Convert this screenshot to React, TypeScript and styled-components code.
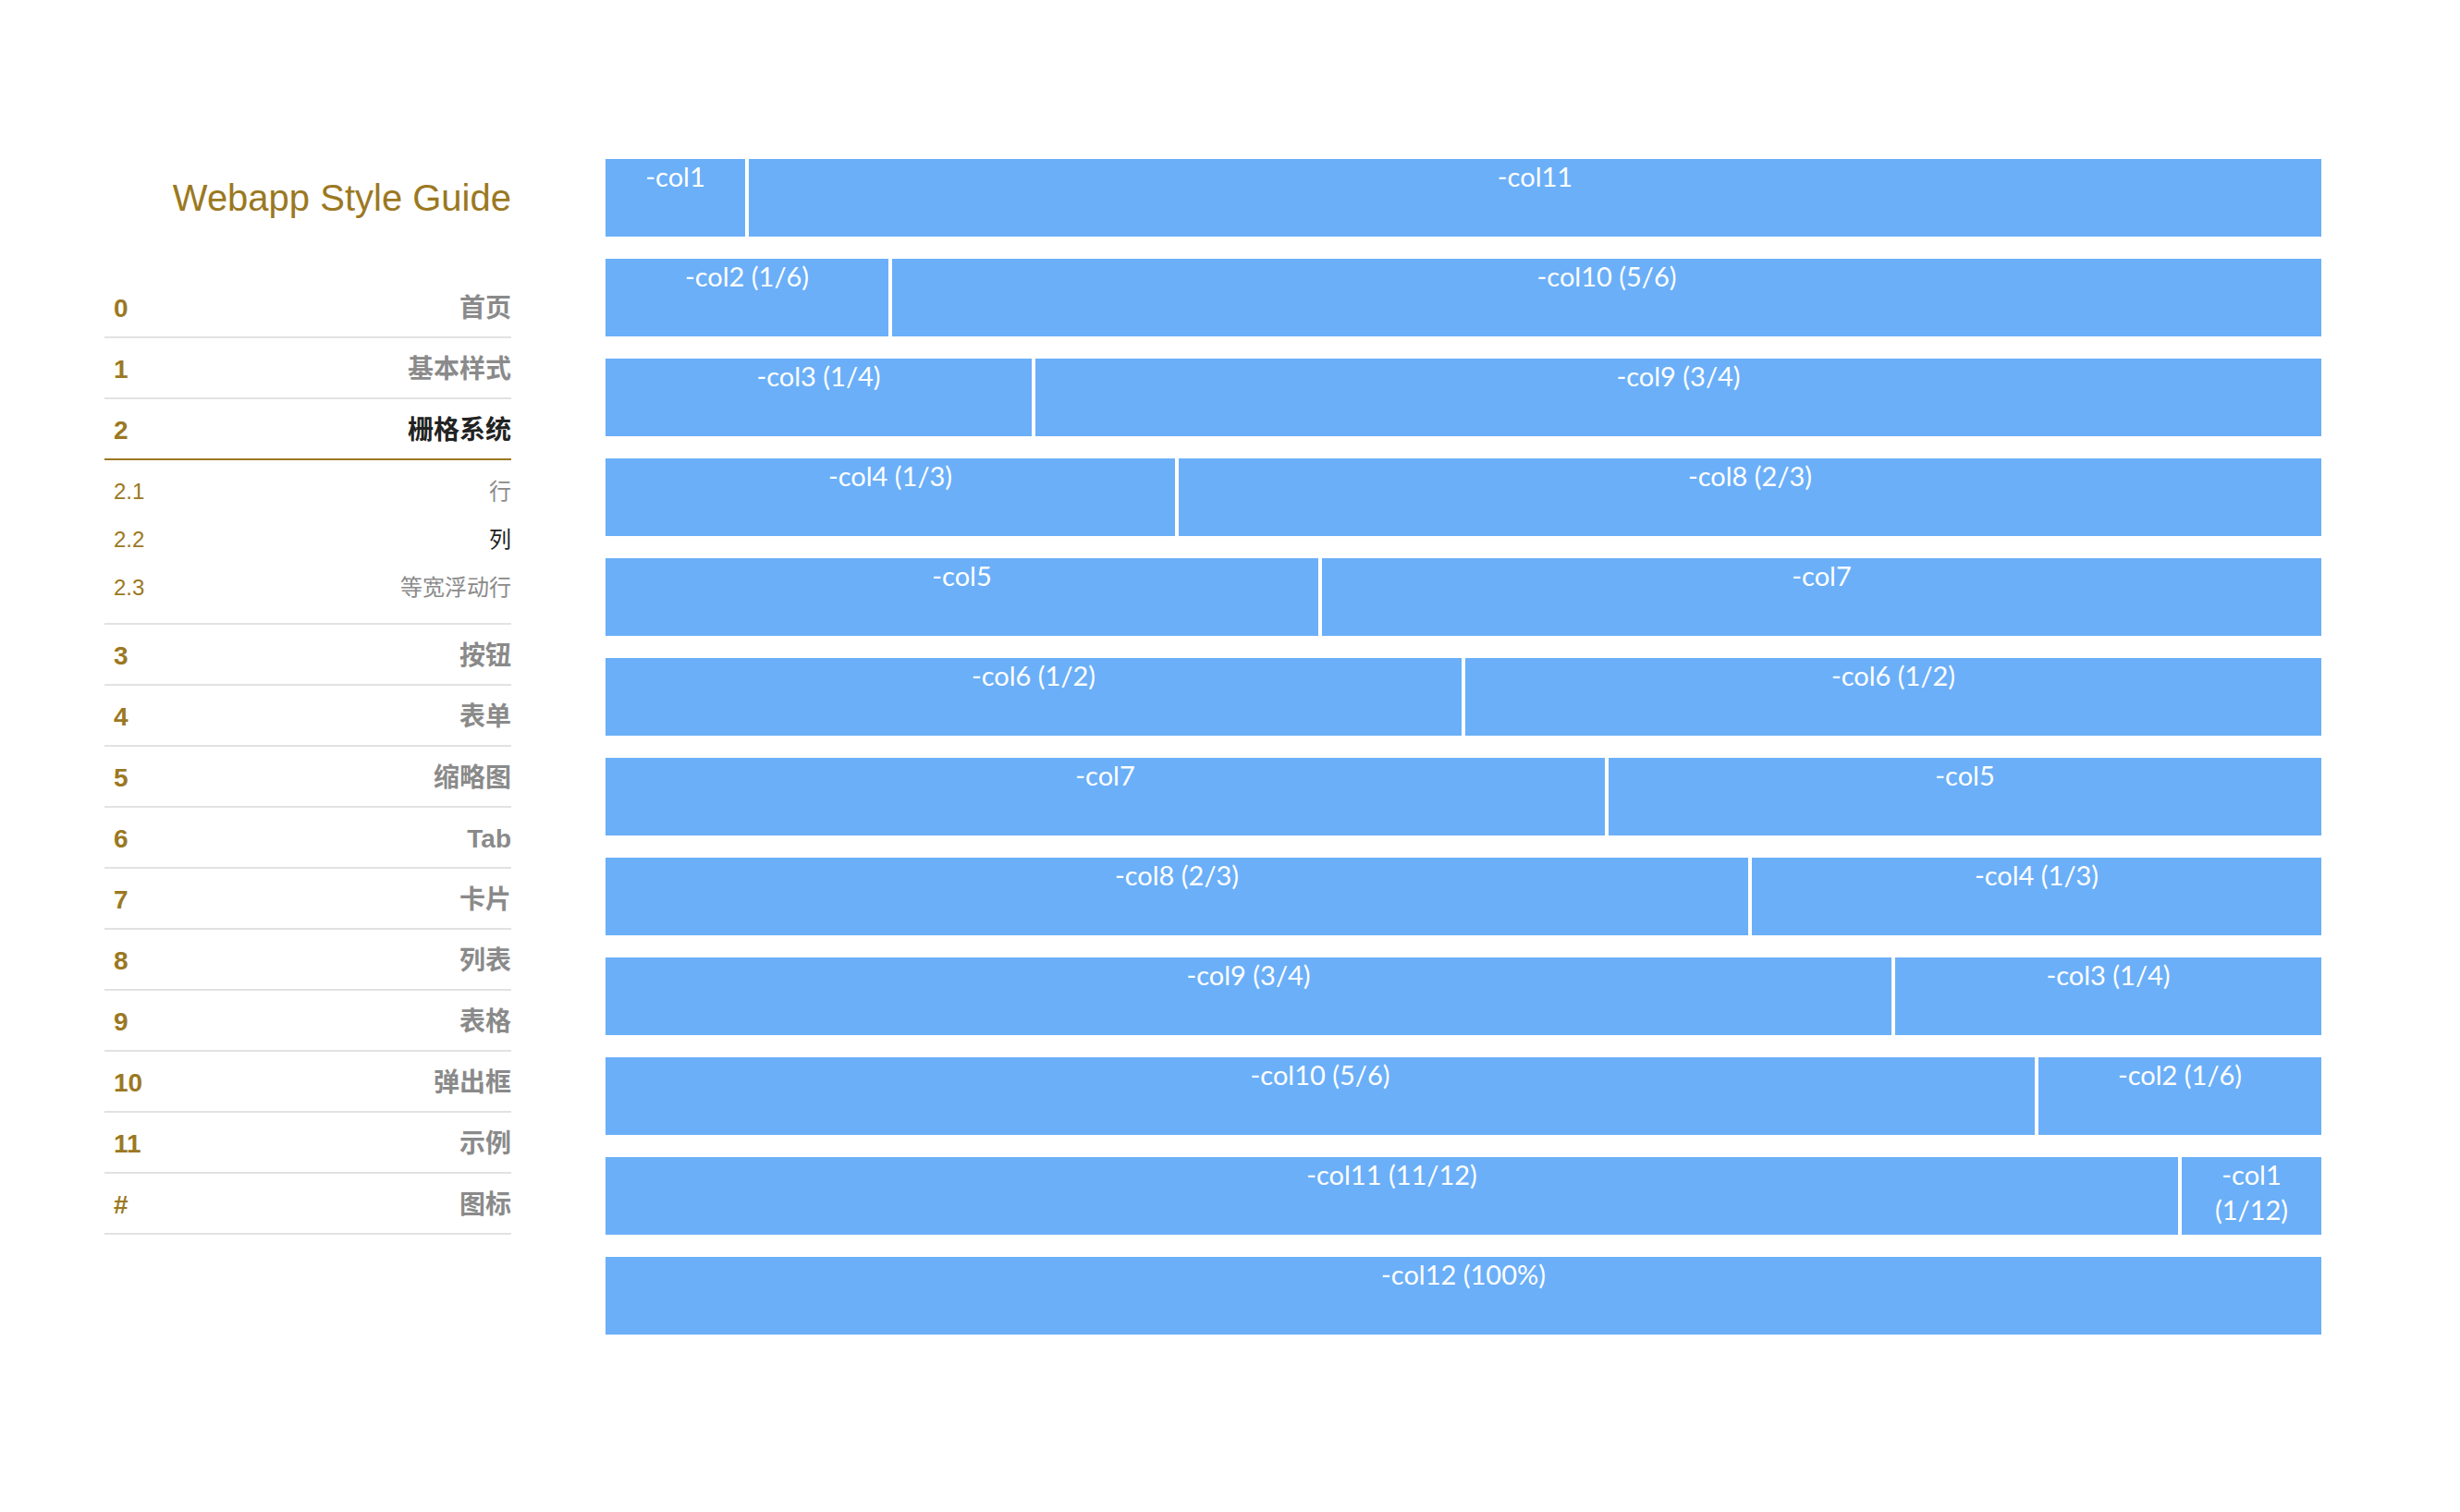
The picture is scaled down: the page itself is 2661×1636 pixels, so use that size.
import React from "react";
import styled, { createGlobalStyle } from "styled-components";

const gold = "#9b7822";
const sans = `"Liberation Sans", "Noto Sans CJK SC", sans-serif`;

const GlobalStyle = createGlobalStyle`
  *, *::before, *::after { box-sizing: border-box; }
  body { margin: 0; background: #fff; font-family: ${sans}; }
`;

const Page = styled.div`
  display: flex;
  align-items: flex-start;
  gap: 102px;
  padding: 172px 150px 120px 113px;
`;

const Sidebar = styled.aside`
  flex: 0 0 440px;
  padding-top: 12px;
`;

const Title = styled.h1`
  margin: 0 0 56px;
  font-size: 40px;
  line-height: 60px;
  font-weight: 400;
  text-align: right;
  white-space: nowrap;
  color: ${gold};
`;

const List = styled.ul`
  list-style: none;
  margin: 0;
  padding: 0;
`;

const SubList = styled(List)`
  padding: 8px 0 12px;
  border-bottom: 2px solid #e2e2e2;
`;

const NavLink = styled.a<{ $active?: boolean }>`
  display: flex;
  justify-content: space-between;
  padding: 4px 0 0 10px;
  border-bottom: 2px solid ${(p) => (p.$active ? gold : "#e2e2e2")};
  font-size: 28px;
  line-height: 60px;
  font-weight: 700;
  text-decoration: none;
  color: ${(p) => (p.$active ? "#222" : "#8a8a8a")};
`;

const SubLink = styled(NavLink)`
  padding-top: 0;
  border-bottom: 0;
  font-size: 24px;
  line-height: 52px;
  font-weight: 400;
`;

const Index = styled.span`
  color: ${gold};
`;

const Grid = styled.main`
  flex: 1;
  min-width: 0;
  display: flex;
  flex-direction: column;
  gap: 24px;
`;

const Row = styled.div`
  display: grid;
  grid-template-columns: repeat(12, minmax(0, 1fr));
  column-gap: 4px;
`;

const Col = styled.div<{ $span: number }>`
  grid-column: span ${(p) => p.$span};
  min-height: 84px;
  padding: 0 4px;
  background: #6baff8;
  color: #fff;
  font-family: Lato, "Liberation Sans", sans-serif;
  font-size: 29px;
  line-height: 38px;
  text-align: center;
`;

type Item = { index: string; label: string; active?: boolean; children?: Item[] };

const items: Item[] = [
  { index: "0", label: "首页" },
  { index: "1", label: "基本样式" },
  {
    index: "2",
    label: "栅格系统",
    active: true,
    children: [
      { index: "2.1", label: "行" },
      { index: "2.2", label: "列", active: true },
      { index: "2.3", label: "等宽浮动行" },
    ],
  },
  { index: "3", label: "按钮" },
  { index: "4", label: "表单" },
  { index: "5", label: "缩略图" },
  { index: "6", label: "Tab" },
  { index: "7", label: "卡片" },
  { index: "8", label: "列表" },
  { index: "9", label: "表格" },
  { index: "10", label: "弹出框" },
  { index: "11", label: "示例" },
  { index: "#", label: "图标" },
];

const rows: [number, string][][] = [
  [[1, "-col1"], [11, "-col11"]],
  [[2, "-col2 (1/6)"], [10, "-col10 (5/6)"]],
  [[3, "-col3 (1/4)"], [9, "-col9 (3/4)"]],
  [[4, "-col4 (1/3)"], [8, "-col8 (2/3)"]],
  [[5, "-col5"], [7, "-col7"]],
  [[6, "-col6 (1/2)"], [6, "-col6 (1/2)"]],
  [[7, "-col7"], [5, "-col5"]],
  [[8, "-col8 (2/3)"], [4, "-col4 (1/3)"]],
  [[9, "-col9 (3/4)"], [3, "-col3 (1/4)"]],
  [[10, "-col10 (5/6)"], [2, "-col2 (1/6)"]],
  [[11, "-col11 (11/12)"], [1, "-col1 (1/12)"]],
  [[12, "-col12 (100%)"]],
];

export default function App() {
  return (
    <>
      <GlobalStyle />
      <Page lang="zh-CN">
        <Sidebar>
          <Title>Webapp Style Guide</Title>
          <nav>
            <List>
              {items.map((item) => (
                <li key={item.index}>
                  <NavLink href="#" $active={item.active}>
                    <Index>{item.index}</Index>
                    <span>{item.label}</span>
                  </NavLink>
                  {item.children && (
                    <SubList>
                      {item.children.map((child) => (
                        <li key={child.index}>
                          <SubLink href="#" $active={child.active}>
                            <Index>{child.index}</Index>
                            <span>{child.label}</span>
                          </SubLink>
                        </li>
                      ))}
                    </SubList>
                  )}
                </li>
              ))}
            </List>
          </nav>
        </Sidebar>
        <Grid>
          {rows.map((cols, r) => (
            <Row key={r}>
              {cols.map(([span, label], c) => (
                <Col key={c} $span={span}>{label}</Col>
              ))}
            </Row>
          ))}
        </Grid>
      </Page>
    </>
  );
}
